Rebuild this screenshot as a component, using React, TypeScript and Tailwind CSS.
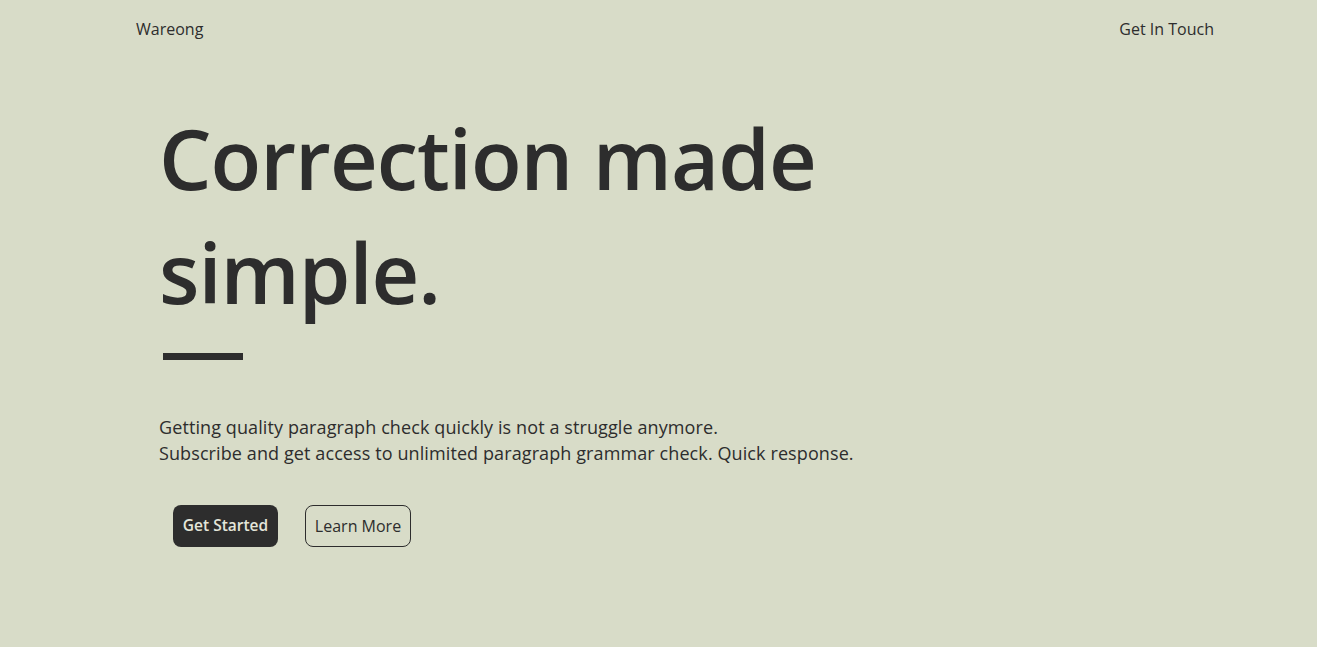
export default function App() {
  return (
    <div
      className="min-h-screen w-full bg-[#d8dcc8] text-[#2d2d2d]"
      style={{ fontFamily: '"Open Sans", "Noto Sans", sans-serif' }}
    >
      <nav className="flex items-center justify-between pl-[136px] pr-[103px] pt-[17px]">
        <a href="#" className="text-[16px] leading-6 font-medium">
          Wareong
        </a>
        <a href="#" className="text-[16px] leading-6 font-medium">
          Get In Touch
        </a>
      </nav>

      <main className="pl-[159px]">
        <h1 className="mt-[60px] text-[83px] leading-[114px] font-semibold tracking-[-1px]">
          Correction made
          <br />
          simple.
        </h1>
        <div className="mt-[24px] ml-[4px] h-[7px] w-[80px] bg-[#2d2d2d]" />

        <p className="mt-[54px] text-[18px] leading-[26px] tracking-[0.1px]">
          Getting quality paragraph check quickly is not a struggle anymore.
          <br />
          Subscribe and get access to unlimited paragraph grammar check. Quick response.
        </p>

        <div className="mt-[39px] ml-[14px] flex items-center gap-[27px]">
          <button className="h-[42px] w-[105px] rounded-[8px] bg-[#2d2d2d] text-[15.5px] font-semibold text-[#e4e6da]">
            Get Started
          </button>
          <button className="h-[42px] w-[106px] rounded-[8px] border border-[#2d2d2d] text-[16px] font-medium">
            Learn More
          </button>
        </div>
      </main>
    </div>
  );
}
